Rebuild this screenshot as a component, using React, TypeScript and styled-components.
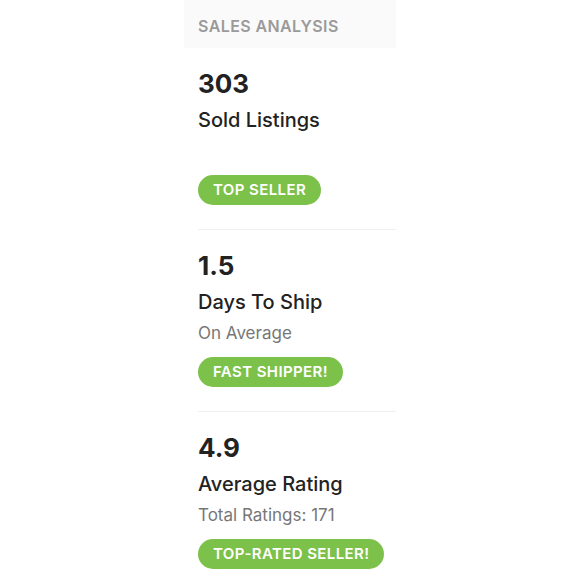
import React from 'react';
import styled, { createGlobalStyle } from 'styled-components';

const GlobalStyle = createGlobalStyle`
  body {
    margin: 0;
    background: #ffffff;
    font-family: Inter, 'Liberation Sans', sans-serif;
  }
`;

interface Stat {
  value: string
  title: string
  subtitle?: string
  badge: string
}

const stats: Stat[] = [
  { value: '303', title: 'Sold Listings', badge: 'TOP SELLER' },
  { value: '1.5', title: 'Days To Ship', subtitle: 'On Average', badge: 'FAST SHIPPER!' },
  { value: '4.9', title: 'Average Rating', subtitle: 'Total Ratings: 171', badge: 'TOP-RATED SELLER!' },
];

export default function App() {
  return (
    <>
      <GlobalStyle />
      <Panel>
        <Header>SALES ANALYSIS</Header>
        {stats.map((s, i) => (
          <Section key={s.value} first={i === 0}>
            <Value>{s.value}</Value>
            <Title>{s.title}</Title>
            <Subtitle>{s.subtitle ?? '\u00a0'}</Subtitle>
            <Badge>{s.badge}</Badge>
          </Section>
        ))}
      </Panel>
    </>
  );
}

const Panel = styled.div`
  width: 212px;
  margin: 0 auto;
`;

const Header = styled.div`
  height: 48px;
  box-sizing: border-box;
  padding: 15px 0 0 14px;
  background: #fafafa;
  color: #9a9a9a;
  font-size: 16px;
  font-weight: 600;
  letter-spacing: 0.4px;
  line-height: 22px;
`;

const Section = styled.div<{ first?: boolean }>`
  margin-left: 14px;
  padding: 20px 0 24px;
  border-top: ${p => (p.first ? 'none' : '1px solid #efefef')};
  display: flex;
  flex-direction: column;
  align-items: flex-start;
`;

const Value = styled.div`
  font-size: 26px;
  font-weight: 700;
  line-height: 32px;
  color: #222;
`;

const Title = styled.div`
  margin-top: 8px;
  font-size: 20px;
  font-weight: 500;
  line-height: 24px;
  color: #222;
`;

const Subtitle = styled.div`
  margin-top: 7px;
  font-size: 17px;
  line-height: 24px;
  color: #777;
`;

const Badge = styled.div`
  margin-top: 12px;
  height: 30px;
  padding: 0 15px;
  border-radius: 15px;
  background: #7cc14a;
  color: #fff;
  font-size: 15px;
  font-weight: 600;
  letter-spacing: 0.4px;
  line-height: 30px;
`;
